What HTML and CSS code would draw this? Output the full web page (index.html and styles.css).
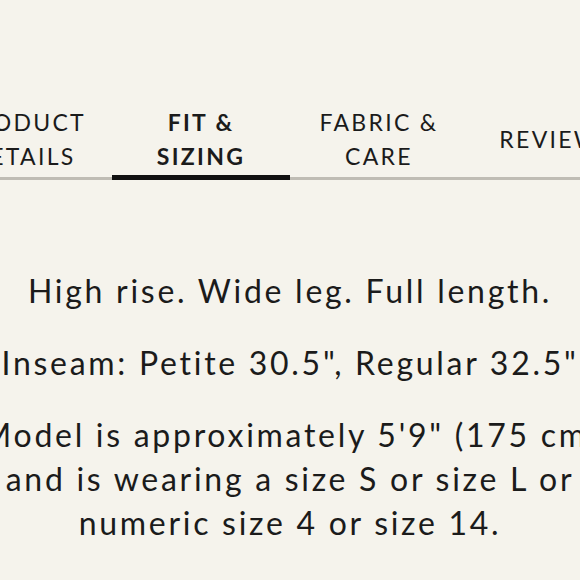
FILE: index.html
```html
<!DOCTYPE html>
<html>
<head>
<meta charset="utf-8">
<link rel="stylesheet" href="styles.css">
</head>
<body>
<div class="page">
  <nav class="tabs">
    <div class="tab">PRODUCT<br>DETAILS</div>
    <div class="tab active">FIT &amp;<br>SIZING</div>
    <div class="tab">FABRIC &amp;<br>CARE</div>
    <div class="tab">REVIEWS</div>
  </nav>
  <div class="content">
    <div class="text">
      <p>High rise. Wide leg. Full length.</p>
      <p>Inseam: Petite 30.5", Regular 32.5"</p>
      <p>Model is approximately 5'9" (175 cm) and is wearing a size S or size L or numeric size 4 or size 14.</p>
    </div>
  </div>
</div>
</body>
</html>
```
FILE: styles.css
```css
html, body {
  margin: 0;
  padding: 0;
  background: #f5f3ec;
}
body {
  font-family: Lato, "Open Sans", sans-serif;
  color: #1b1b1b;
  width: 580px;
  height: 580px;
  overflow: hidden;
}
.page {
  width: 580px;
}
.tabs {
  display: flex;
  justify-content: center;
  align-items: stretch;
  margin-top: 105px;
}
.tab {
  flex: 0 0 178px;
  display: flex;
  align-items: center;
  justify-content: center;
  text-align: center;
  font-size: 23px;
  line-height: 34px;
  letter-spacing: 0.1em;
  padding-bottom: 4px;
  border-bottom: 3px solid #bfbcb4;
}
.tab.active {
  font-weight: 700;
  padding-bottom: 2px;
  border-bottom: 5px solid #111;
}
.content {
  display: flex;
  justify-content: center;
  margin-top: 89px;
}
.text {
  flex: 0 0 660px;
  text-align: center;
  font-size: 32px;
  line-height: 44px;
  letter-spacing: 0.085em;
}
.text p {
  margin: 0 0 28px;
}
```
